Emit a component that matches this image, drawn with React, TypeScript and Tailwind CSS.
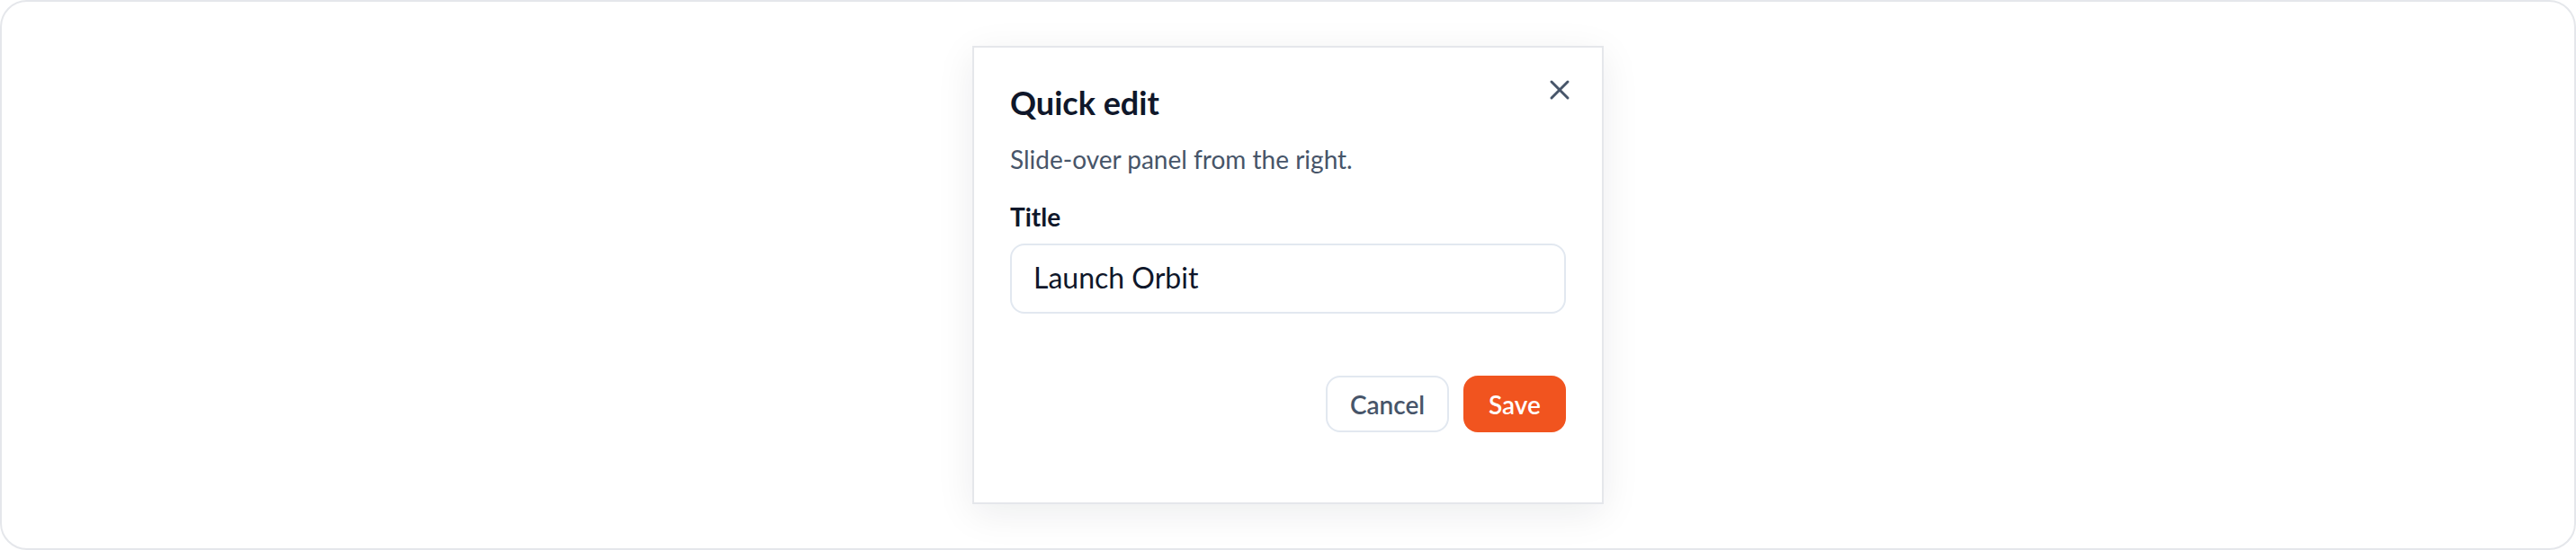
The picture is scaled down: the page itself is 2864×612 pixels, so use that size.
import { X } from "lucide-react";

export default function App() {
  return (
    <div className="h-[612px] w-full bg-white font-['Lato','Inter',sans-serif]">
      <div className="flex h-full w-full items-center justify-center rounded-[30px] border-2 border-[#e5e7eb] bg-white">
        <div className="relative flex h-[510px] w-[702px] flex-col border-2 border-[#e5e7eb] bg-white px-[40px] pt-[41px] shadow-[0_10px_40px_rgba(15,23,42,0.08)]">
          <button className="absolute right-[29px] top-[29px] text-[#475569]">
            <X size={36} strokeWidth={2} />
          </button>
          <h2 className="text-[36px] font-bold leading-[40px] text-[#0f172a]">Quick edit</h2>
          <p className="mt-[23px] text-[28px] leading-[40px] text-[#475569]">
            Slide-over panel from the right.
          </p>
          <label className="mt-[24px] text-[28px] font-bold leading-[40px] text-[#0f172a]">Title</label>
          <input
            defaultValue="Launch Orbit"
            className="mt-[10px] h-[78px] w-full rounded-[16px] border-2 border-[#e2e8f0] bg-white px-[24px] pb-[4px] text-[32px] text-[#0f172a] outline-none"
          />
          <div className="mt-[69px] flex justify-end gap-[16px]">
            <button className="flex h-[63px] w-[137px] items-center justify-center rounded-[16px] border-2 border-[#e2e8f0] bg-white text-[28px] font-semibold text-[#475569]">
              Cancel
            </button>
            <button className="flex h-[63px] w-[114px] items-center justify-center rounded-[16px] bg-[#f1541f] text-[28px] font-semibold text-white">
              Save
            </button>
          </div>
        </div>
      </div>
    </div>
  );
}
